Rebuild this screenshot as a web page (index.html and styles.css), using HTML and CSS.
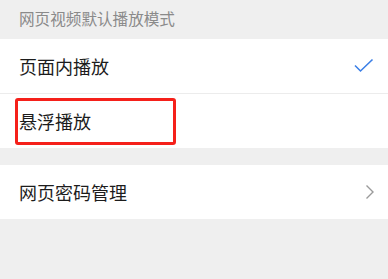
FILE: index.html
```html
<!DOCTYPE html>
<html lang="zh">
<head>
<meta charset="utf-8">
<link rel="stylesheet" href="styles.css">
</head>
<body>
<div class="section-title">网页视频默认播放模式</div>
<div class="group">
  <div class="row row-divided">
    <span class="label">页面内播放</span>
    <svg class="check" width="22" height="16" viewBox="0 0 22 16"><path d="M2 7.5 L7.5 13 L19.5 1.5" fill="none" stroke="#3b7fe6" stroke-width="1.6"/></svg>
  </div>
  <div class="row">
    <span class="label">悬浮播放</span>
    <div class="highlight"></div>
  </div>
</div>
<div class="group group-spaced">
  <div class="row">
    <span class="label">网页密码管理</span>
    <svg class="chevron" width="10" height="16" viewBox="0 0 10 16"><path d="M1.5 1.5 L8 8 L1.5 14.5" fill="none" stroke="#9a9a9a" stroke-width="1.4"/></svg>
  </div>
</div>
</body>
</html>
```
FILE: styles.css
```css
html, body {
  margin: 0;
  padding: 0;
  background: #efefef;
  font-family: "Noto Sans CJK SC", "Noto Sans", sans-serif;
}
.section-title {
  height: 39px;
  line-height: 37px;
  padding-left: 19px;
  font-size: 15.6px;
  color: #8a8a8a;
}
.group {
  background: #fff;
}
.group-spaced {
  margin-top: 17px;
}
.row {
  position: relative;
  height: 54px;
  display: flex;
  align-items: center;
  justify-content: space-between;
  padding: 0 13px 0 19px;
}
.row-divided {
  height: 54px;
  border-bottom: 1px solid #ececec;
}
.label {
  font-size: 18px;
  color: #1c1c1c;
}
.check {
  display: block;
}
.chevron {
  display: block;
}
.highlight {
  position: absolute;
  left: 15px;
  top: 4px;
  width: 155px;
  height: 41px;
  border: 3px solid #f5201a;
  border-radius: 3px;
}
```
